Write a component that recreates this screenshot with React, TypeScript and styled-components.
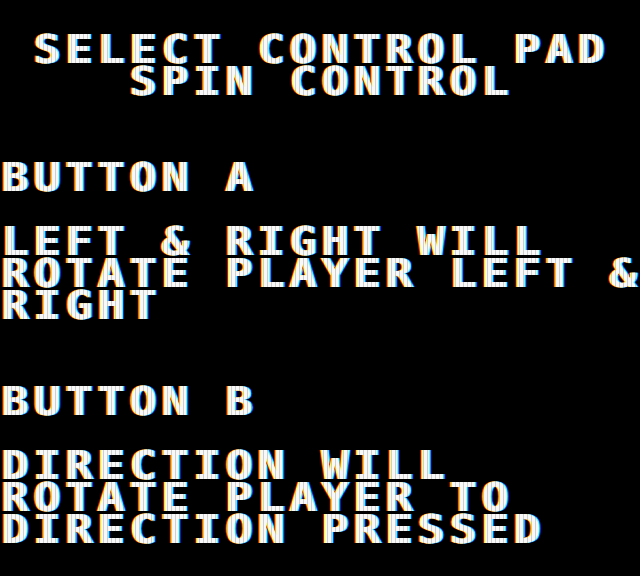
import React from 'react';
import styled, { createGlobalStyle } from 'styled-components';

// 20 x 18 tile map, one character per 32px tile
const SCREEN_ROWS = [
  '',
  ' SELECT CONTROL PAD',
  '    SPIN CONTROL',
  '',
  '',
  'BUTTON A',
  '',
  'LEFT & RIGHT WILL',
  'ROTATE PLAYER LEFT &',
  'RIGHT',
  '',
  '',
  'BUTTON B',
  '',
  'DIRECTION WILL',
  'ROTATE PLAYER TO',
  'DIRECTION PRESSED',
  '',
];

const COLS = 20;

const GlobalStyle = createGlobalStyle`
  html, body {
    margin: 0;
    padding: 0;
    background: #000;
  }
`;

const Screen = styled.div`
  position: relative;
  width: 640px;
  height: 576px;
  background: #000;
  display: grid;
  grid-template-columns: repeat(${COLS}, 32px);
  grid-auto-rows: 32px;
  overflow: hidden;

  /* faint vertical scan stripes over the lit pixels */
  &::after {
    content: '';
    position: absolute;
    inset: 0;
    pointer-events: none;
    background: repeating-linear-gradient(
      90deg,
      #ffffff 0px,
      #ffffff 3px,
      #d4d4d4 3px,
      #d4d4d4 4px
    );
    mix-blend-mode: multiply;
  }
`;

const Tile = styled.div`
  width: 32px;
  height: 32px;
  display: flex;
  justify-content: center;
  align-items: flex-start;
`;

const Glyph = styled.span`
  display: inline-block;
  height: 30px;
  line-height: 30px;
  font-family: 'DejaVu Sans Mono', 'Liberation Mono', monospace;
  font-weight: bold;
  font-size: 39px;
  color: #f8f8f8;
  white-space: pre;
  transform: translate(-0.5px, 2.5px) scaleX(1.15);
  text-shadow:
    -1px 0 #ffff40,
    -2px 0 #ff1a00,
    1px 0 #40ffff,
    2px 0 #1030ff;
`;

const App = () => {
  return (
    <>
      <GlobalStyle />
      <Screen>
        {SCREEN_ROWS.map((row, r) =>
          row
            .padEnd(COLS, ' ')
            .split('')
            .map((ch, c) => (
              <Tile key={`${r}-${c}`}>
                {ch !== ' ' && <Glyph>{ch}</Glyph>}
              </Tile>
            ))
        )}
      </Screen>
    </>
  );
};

export default App;
